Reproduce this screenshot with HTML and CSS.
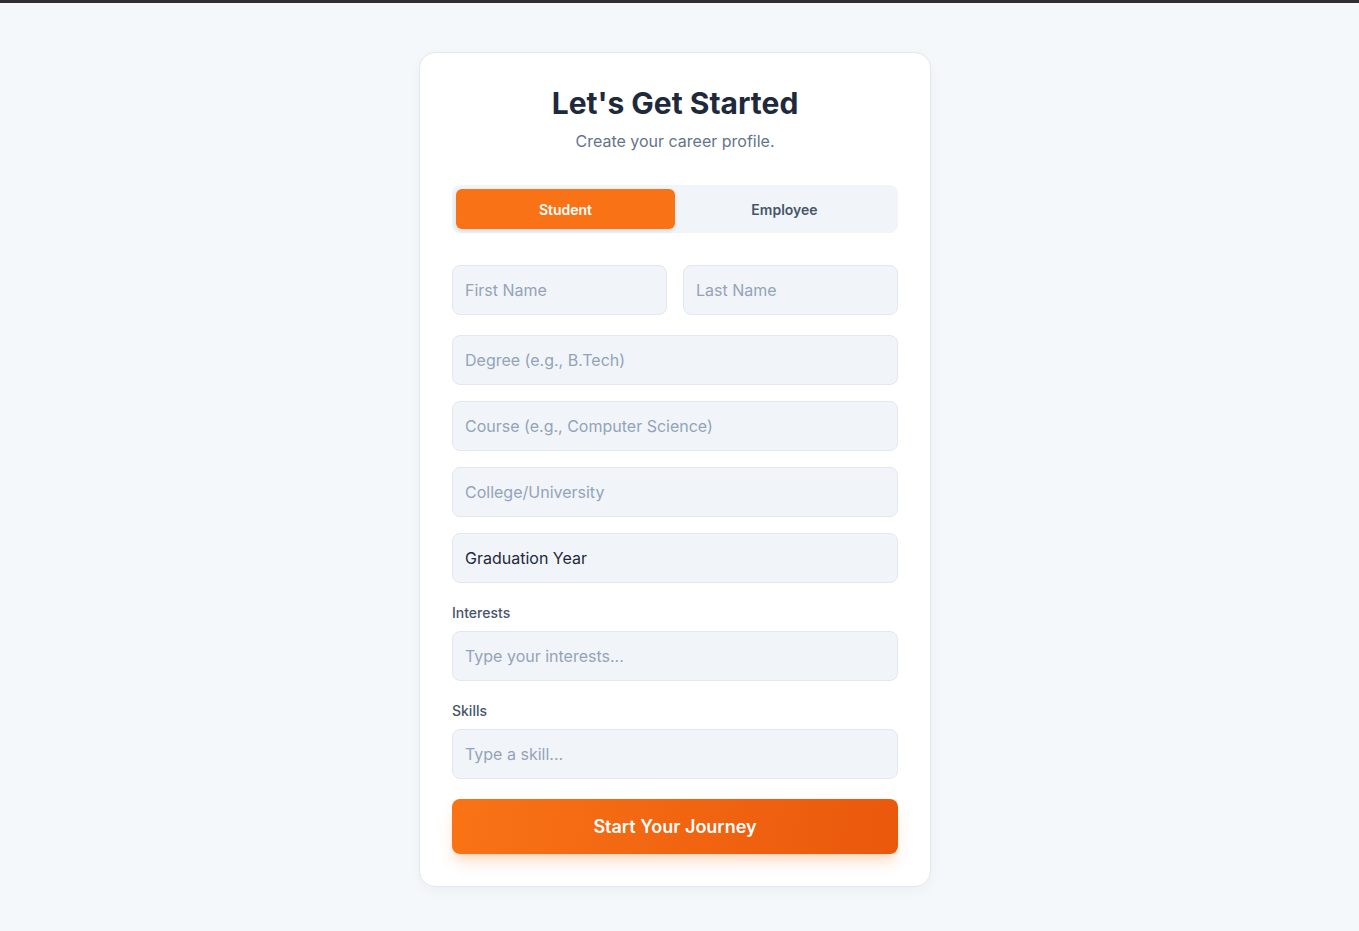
FILE: index.html
```html
<!DOCTYPE html>
<html lang="en">
<head>
<meta charset="utf-8">
<title>Let's Get Started</title>
<link rel="stylesheet" href="styles.css">
</head>
<body>
<div class="topbar"></div>
<main class="page">
  <form class="card">
    <h1 class="title">Let's Get Started</h1>
    <p class="subtitle">Create your career profile.</p>
    <div class="tabs">
      <button type="button" class="tab active">Student</button>
      <button type="button" class="tab">Employee</button>
    </div>
    <div class="row">
      <input class="field" type="text" placeholder="First Name">
      <input class="field" type="text" placeholder="Last Name">
    </div>
    <div class="stack">
      <input class="field" type="text" placeholder="Degree (e.g., B.Tech)">
      <input class="field" type="text" placeholder="Course (e.g., Computer Science)">
      <input class="field" type="text" placeholder="College/University">
      <div class="field select">Graduation Year</div>
    </div>
    <label class="label">Interests</label>
    <input class="field" type="text" placeholder="Type your interests...">
    <label class="label">Skills</label>
    <input class="field" type="text" placeholder="Type a skill...">
    <button type="button" class="submit">Start Your Journey</button>
  </form>
</main>
</body>
</html>
```

FILE: styles.css
```css
* { box-sizing: border-box; }
html, body { margin: 0; padding: 0; }
body {
  background: #f5f8fb;
  font-family: Inter, "Noto Sans", "Liberation Sans", sans-serif;
  color: #1e293b;
  min-height: 931px;
}
.topbar {
  height: 3px;
  background: #2e2e33;
}
.page {
  display: flex;
  justify-content: center;
  padding: 49px 9px 0 0;
}
.card {
  width: 512px;
  background: #ffffff;
  border: 1px solid #e2e8f0;
  border-radius: 16px;
  padding: 32px 32px 32px;
  box-shadow: 0 4px 12px rgba(15, 23, 42, 0.04);
  display: flex;
  flex-direction: column;
}
.title {
  margin: 0;
  text-align: center;
  font-size: 30px;
  line-height: 36px;
  font-weight: 700;
  color: #1e293b;
}
.subtitle {
  margin: 8px 0 0;
  text-align: center;
  font-size: 16px;
  line-height: 24px;
  color: #64748b;
}
.tabs {
  margin-top: 32px;
  display: flex;
  background: #f1f5f9;
  border-radius: 8px;
  padding: 4px;
  height: 48px;
}
.tab {
  flex: 1;
  border: 0;
  background: transparent;
  font-family: inherit;
  font-size: 14px;
  font-weight: 600;
  color: #475569;
  border-radius: 6px;
  cursor: pointer;
}
.tab.active {
  background: #f97316;
  color: #ffffff;
  box-shadow: 0 2px 4px rgba(15, 23, 42, 0.12);
}
.row {
  margin-top: 32px;
  display: grid;
  grid-template-columns: 1fr 1fr;
  gap: 16px;
}
.stack {
  margin-top: 20px;
  display: flex;
  flex-direction: column;
  gap: 16px;
}
.field {
  display: block;
  width: 100%;
  height: 50px;
  background: #f1f5f9;
  border: 1px solid #e2e8f0;
  border-radius: 8px;
  padding: 0 12px;
  font-family: inherit;
  font-size: 16px;
  color: #1e293b;
  outline: none;
}
.field::placeholder { color: #94a3b8; }
.select {
  display: flex;
  align-items: center;
  color: #1e293b;
}
.label {
  display: block;
  margin-top: 20px;
  margin-bottom: 8px;
  font-size: 14px;
  line-height: 20px;
  font-weight: 500;
  color: #475569;
}
.submit {
  margin-top: 20px;
  height: 55px;
  border: 0;
  border-radius: 8px;
  background: linear-gradient(100deg, #f97316 0%, #ea580c 100%);
  color: #ffffff;
  font-family: inherit;
  font-size: 18px;
  font-weight: 600;
  box-shadow: 0 10px 15px -3px rgba(249, 115, 22, 0.25), 0 4px 6px -4px rgba(249, 115, 22, 0.2);
  cursor: pointer;
}
```
